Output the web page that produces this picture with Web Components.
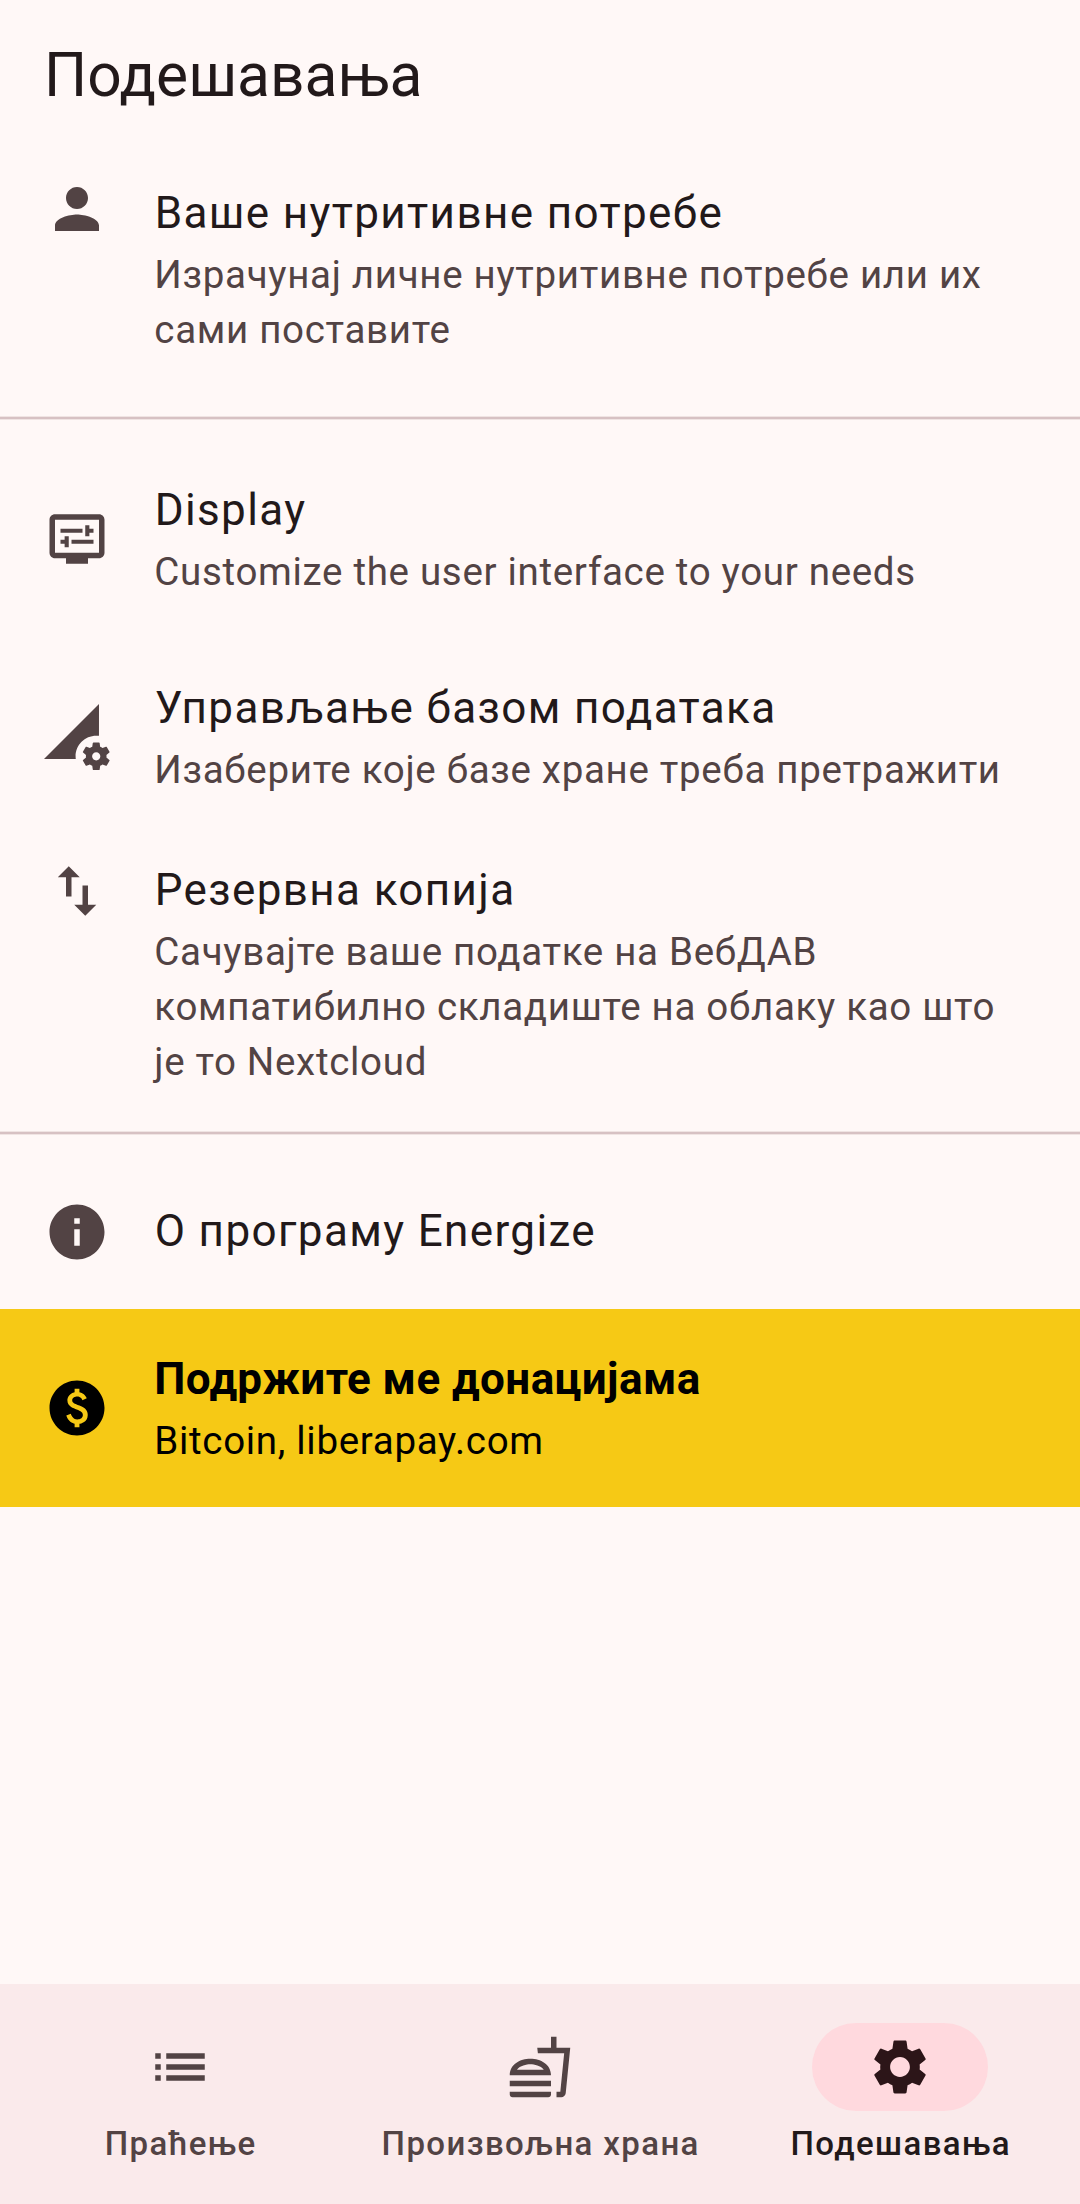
<!DOCTYPE html>
<html lang="sr">
<head>
<meta charset="utf-8">
<title>Подешавања</title>
<style>
  html, body { margin: 0; padding: 0; }
  body { background: #fff8f7; font-family: Roboto, "Noto Sans", sans-serif; color: #22191a; }
</style>
</head>
<body>
<settings-screen></settings-screen>
<script>
const ICONS = {
  person: 'M12 12c2.21 0 4-1.79 4-4s-1.79-4-4-4-4 1.79-4 4 1.79 4 4 4zm0 2c-2.67 0-8 1.34-8 4v2h16v-2c0-2.66-5.33-4-8-4z',
  display: 'M20 3H4C2.89 3 2 3.89 2 5v12c0 1.1.89 2 2 2h4v2h8v-2h4c1.1 0 2-.9 2-2V5c0-1.11-.9-2-2-2zM20 17H4V5h16V17zM6 8.25h8v1.5H6zM16.5 9.75h1.5v-1.5h-1.5V7H15v4h1.5V9.75zM10 12.25h8v1.5h-8zM7.5 15H9v-4H7.5v1.25H6v1.5h1.5V15z',
  database: 'M18.99 11.5c.34 0 .67.03 1 .07L20 0 0 20h11.56c-.04-.33-.07-.66-.07-1 0-4.14 3.36-7.5 7.5-7.5zm3.71 7.99c.02-.16.04-.32.04-.49 0-.17-.01-.33-.04-.49l1.06-.83c.09-.08.12-.21.06-.32l-1-1.73c-.06-.11-.19-.15-.31-.11l-1.24.5c-.26-.2-.54-.37-.85-.49l-.19-1.32c-.01-.12-.12-.21-.24-.21h-2c-.12 0-.23.09-.25.21l-.19 1.32c-.3.13-.59.29-.85.49l-1.24-.5c-.11-.04-.24 0-.31.11l-1 1.73c-.06.11-.04.24.06.32l1.06.83c-.02.16-.03.32-.03.49 0 .17.01.33.03.49l-1.06.83c-.09.08-.12.21-.06.32l1 1.73c.06.11.19.15.31.11l1.24-.5c.26.2.54.37.85.49l.19 1.32c.02.12.12.21.25.21h2c.12 0 .23-.09.25-.21l.19-1.32c.3-.13.59-.29.84-.49l1.25.5c.11.04.24 0 .31-.11l1-1.73c.06-.11.03-.24-.06-.32l-1.07-.83zm-3.71 1.01c-.83 0-1.5-.67-1.5-1.5s.67-1.5 1.5-1.5 1.5.67 1.5 1.5-.67 1.5-1.5 1.5z',
  transfer: 'M9 3L5 6.99h3V14h2V6.99h3L9 3zm7 14.01V10h-2v7.01h-3L15 21l4-3.99h-3z',
  info: 'M12 2C6.48 2 2 6.48 2 12s4.48 10 10 10 10-4.48 10-10S17.52 2 12 2zm1 15h-2v-6h2v6zm0-8h-2V7h2v2z',
  paid: 'M12 2C6.48 2 2 6.48 2 12s4.48 10 10 10 10-4.48 10-10S17.52 2 12 2zm.88 15.76V19h-1.75v-1.29c-.74-.18-2.39-.77-3.02-2.96l1.65-.67c.06.22.58 2.09 2.4 2.09.93 0 1.98-.48 1.98-1.61 0-.96-.7-1.46-2.28-2.03-1.1-.39-3.35-1.03-3.35-3.31 0-.1.01-2.4 2.62-2.96V5h1.75v1.24c1.84.32 2.51 1.79 2.66 2.23l-1.58.67c-.11-.35-.59-1.34-1.9-1.34-.7 0-1.81.37-1.81 1.39 0 .95.86 1.31 2.64 1.9 2.4.83 3.01 2.05 3.01 3.45 0 2.63-2.5 3.13-3.02 3.22z',
  list: 'M3 13h2v-2H3v2zm0 4h2v-2H3v2zm0-8h2V7H3v2zm4 4h14v-2H7v2zm0 4h14v-2H7v2zM7 7v2h14V7H7z',
  food: 'M1 21.98c0 .56.45 1.01 1.01 1.01H15c.56 0 1.01-.45 1.01-1.01V21H1v.98zM8.5 8.99C4.75 8.99 1 11 1 15h15c0-4-3.75-6.01-7.5-6.01zM3.62 13c1.11-1.55 3.47-2.01 4.88-2.01s3.77.46 4.88 2.01H3.62zM1 17h15v2H1zM18 5V1h-2v4h-5l.23 2h9.56l-1.4 14H18v2h1.72c.84 0 1.53-.65 1.63-1.47L23 5h-5z',
  settings: 'M19.14 12.94c.04-.3.06-.61.06-.94 0-.32-.02-.64-.07-.94l2.03-1.58c.18-.14.23-.41.12-.61l-1.92-3.32c-.12-.22-.37-.29-.59-.22l-2.39.96c-.5-.38-1.03-.7-1.62-.94L14.4 2.81c-.04-.24-.24-.41-.48-.41h-3.84c-.24 0-.43.17-.47.41L9.25 5.35C8.66 5.59 8.12 5.92 7.63 6.29L5.24 5.33c-.22-.08-.47 0-.59.22L2.74 8.87c-.12.21-.08.47.12.61l2.03 1.58C4.84 11.36 4.8 11.69 4.8 12s.02.64.07.94l-2.03 1.58c-.18.14-.23.41-.12.61l1.92 3.32c.12.22.37.29.59.22l2.39-.96c.5.38 1.03.7 1.62.94l.36 2.54c.05.24.24.41.48.41h3.84c.24 0 .44-.17.47-.41l.36-2.54c.59-.24 1.13-.56 1.62-.94l2.39.96c.22.08.47 0 .59-.22l1.92-3.32c.12-.22.07-.47-.12-.61l-2.01-1.58zM12 15.6c-1.98 0-3.6-1.62-3.6-3.6s1.62-3.6 3.6-3.6 3.6 1.62 3.6 3.6-1.62 3.6-3.6 3.6z'
};

class MdIcon extends HTMLElement {
  connectedCallback() {
    this.attachShadow({ mode: 'open' }).innerHTML = `
      <style>:host{display:block;width:66px;height:66px;flex:none}svg{display:block;width:100%;height:100%;fill:currentColor}</style>
      <svg viewBox="0 0 24 24" aria-hidden="true"><path fill-rule="evenodd" d="${ICONS[this.getAttribute('name')]}"/></svg>`;
  }
}
customElements.define('md-icon', MdIcon);

class AppHeader extends HTMLElement {
  connectedCallback() {
    this.attachShadow({ mode: 'open' }).innerHTML = `
      <style>:host{display:flex;align-items:center;height:154px;padding:0 44px;box-sizing:border-box;flex:none}
      h1{margin:0 0 3px;font-size:60.5px;line-height:77px;font-weight:400;letter-spacing:0}</style>
      <h1><slot></slot></h1>`;
  }
}
customElements.define('app-header', AppHeader);

class SettingItem extends HTMLElement {
  connectedCallback() {
    this.attachShadow({ mode: 'open' }).innerHTML = `
      <style>
      :host{display:flex;align-items:center;gap:44px;height:198px;padding:0 66px 0 44px;box-sizing:border-box;flex:none;color:#22191a;--sub:#524344}
      .text{flex:1;min-width:0;margin-top:-2px}
      :host([lines="1"]){height:154px}
      :host([lines="3"]){height:242px;align-items:flex-start;padding-top:22px}
      :host([lines="3"]) .text{margin-top:4px}
      :host([lines="4"]){height:275px;align-items:flex-start;padding-top:22px}
      :host([lines="4"]) .text{margin-top:-1px}
      :host([accent]){background:#f6c915;color:#000;--sub:#000;--icon:#000}
      md-icon{color:var(--icon,#524344)}
      .title{font-size:44px;line-height:66px;letter-spacing:1.375px;padding-left:.6875px}
      :host([accent]) .title{font-weight:700;letter-spacing:.4125px;padding-left:.2px}
      .sub{font-size:38.5px;line-height:55px;letter-spacing:.6875px;color:var(--sub);margin-top:1px;padding-left:.34px}
      :host([lines="1"]) .sub{display:none}
      </style>
      <md-icon name="${this.getAttribute('icon')}"></md-icon>
      <div class="text"><div class="title"><slot></slot></div><div class="sub"><slot name="sub"></slot></div></div>`;
  }
}
customElements.define('setting-item', SettingItem);

class ListDivider extends HTMLElement {
  connectedCallback() {
    this.attachShadow({ mode: 'open' }).innerHTML = `
      <style>:host{display:flex;align-items:center;height:44px;flex:none}
      i{display:block;width:100%;height:2px;background:#d7c1c3;border:solid rgba(215,193,195,.375);border-width:1px 0;background-clip:padding-box}</style><i></i>`;
  }
}
customElements.define('list-divider', ListDivider);

class NavItem extends HTMLElement {
  connectedCallback() {
    this.attachShadow({ mode: 'open' }).innerHTML = `
      <style>
      :host{display:flex;flex-direction:column;align-items:center;flex:1;color:#524344;padding-top:39px;gap:11px}
      .pill{display:flex;align-items:center;justify-content:center;width:176px;height:88px;border-radius:44px}
      :host([selected]) .pill{background:#ffd9de;color:#2c1518}
      .label{font-size:33px;line-height:44px;font-weight:500;letter-spacing:1.375px;padding-left:1.375px;white-space:nowrap}
      :host([selected]) .label{color:#22191a}
      </style>
      <div class="pill"><md-icon name="${this.getAttribute('icon')}"></md-icon></div>
      <div class="label"><slot></slot></div>`;
  }
}
customElements.define('nav-item', NavItem);

class NavBar extends HTMLElement {
  connectedCallback() {
    this.attachShadow({ mode: 'open' }).innerHTML = `
      <style>:host{display:flex;height:220px;background:#faeaeb;flex:none}</style><slot></slot>`;
  }
}
customElements.define('nav-bar', NavBar);

class SettingsScreen extends HTMLElement {
  connectedCallback() {
    this.attachShadow({ mode: 'open' }).innerHTML = `
      <style>:host{display:flex;flex-direction:column;width:1080px;height:2204px;overflow:hidden;background:#fff8f7}
      main{flex:1;display:flex;flex-direction:column}</style>
      <app-header>Подешавања</app-header>
      <main>
        <setting-item icon="person" lines="3">Ваше нутритивне потребе<span slot="sub">Израчунај личне нутритивне потребе или их сами поставите</span></setting-item>
        <list-divider></list-divider>
        <setting-item icon="display">Display<span slot="sub">Customize the user interface to your needs</span></setting-item>
        <setting-item icon="database">Управљање базом података<span slot="sub">Изаберите које базе хране треба претражити</span></setting-item>
        <setting-item icon="transfer" lines="4">Резервна копија<span slot="sub">Сачувајте ваше податке на ВебДАВ компатибилно складиште на облаку као што је то Nextcloud</span></setting-item>
        <list-divider></list-divider>
        <setting-item icon="info" lines="1">О програму Energize</setting-item>
        <setting-item icon="paid" accent>Подржите ме донацијама<span slot="sub">Bitcoin, liberapay.com</span></setting-item>
      </main>
      <nav-bar>
        <nav-item icon="list">Праћење</nav-item>
        <nav-item icon="food">Произвољна храна</nav-item>
        <nav-item icon="settings" selected>Подешавања</nav-item>
      </nav-bar>`;
  }
}
customElements.define('settings-screen', SettingsScreen);
</script>
</body>
</html>
